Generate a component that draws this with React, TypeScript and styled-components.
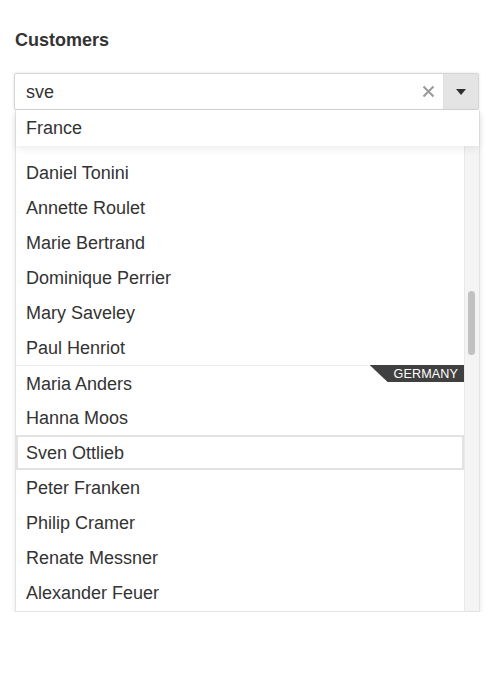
import React from "react";
import styled, { createGlobalStyle } from "styled-components";

const GlobalStyle = createGlobalStyle`
  html, body { margin: 0; padding: 0; background: #ffffff; }
  body { font-family: "Liberation Sans", Arial, sans-serif; color: #333333; }
  * { box-sizing: border-box; }
`;

const Page = styled.div`
  padding: 29px 15px 0 14px;
  width: 494px;
`;

const Title = styled.div`
  font-size: 18px;
  line-height: 22px;
  font-weight: bold;
  color: #333333;
  padding-left: 1px;
  margin-bottom: 22px;
`;

const Combo = styled.div`
  display: flex;
  height: 37px;
  width: 465px;
  border: 1px solid #d5d5d5;
  border-radius: 2px;
  box-shadow: 0 0 3px rgba(0, 0, 0, 0.12);
  background: #ffffff;
`;

const InputText = styled.div`
  flex: 1;
  display: flex;
  align-items: center;
  padding: 2px 0 0 11px;
  font-size: 18px;
  color: #333333;
`;

const ClearBtn = styled.div`
  width: 28px;
  display: flex;
  align-items: center;
  justify-content: center;
  padding-right: 1px;
`;

const ArrowBtn = styled.div`
  width: 35px;
  display: flex;
  align-items: center;
  justify-content: center;
  background: #e4e4e4;
  border-left: 1px solid #e0e0e0;
`;

const Popup = styled.div`
  margin-left: 1px;
  width: 465px;
  border: 1px solid #e3e3e3;
  border-top: none;
  background: #ffffff;
  box-shadow: 0 3px 5px rgba(0, 0, 0, 0.1);
`;

const GroupHeader = styled.div`
  position: relative;
  z-index: 1;
  height: 36px;
  display: flex;
  align-items: center;
  padding: 1px 0 0 10px;
  font-size: 18px;
  background: #ffffff;
  box-shadow: 0 3px 8px rgba(0, 0, 0, 0.07);
`;

const Body = styled.div`
  display: flex;
  height: 465px;
  overflow: hidden;
`;

const List = styled.ul`
  flex: 1;
  list-style: none;
  margin: 0;
  padding: 9px 0 0 0;
`;

const Item = styled.li<{ $focused?: boolean; $groupStart?: boolean }>`
  position: relative;
  height: 35px;
  display: flex;
  align-items: center;
  padding: 2px 0 0 10px;
  font-size: 18px;
  color: #333333;
  border-top: ${(p) => (p.$groupStart ? "1px solid #ececec" : "none")};
  box-shadow: ${(p) => (p.$focused ? "inset 0 0 0 2px #e2e2e2" : "none")};
`;

const Badge = styled.span`
  position: absolute;
  top: -1px;
  right: 0;
  height: 17px;
  display: flex;
  align-items: center;
  padding: 0 6px 0 24px;
  font-size: 12.6px;
  color: #ffffff;
  background: #404040;
  clip-path: polygon(0 0, 100% 0, 100% 100%, 18px 100%);
  letter-spacing: 0.1px;
`;

const Track = styled.div`
  width: 15px;
  background: #f4f4f4;
  border-left: 1px solid #e8e8e8;
  padding: 145px 0 0 3px;
`;

const Thumb = styled.div`
  width: 7px;
  height: 64px;
  border-radius: 4px;
  background: #c1c1c1;
`;

const ClearIcon = () => (
  <svg width="13" height="13" viewBox="0 0 13 13">
    <path d="M1.5 1.5 L11.5 11.5 M11.5 1.5 L1.5 11.5" stroke="#9a9a9a" strokeWidth="2" />
  </svg>
);

const ArrowIcon = () => (
  <svg width="10" height="6" viewBox="0 0 10 6">
    <path d="M0 0 H10 L5 6 Z" fill="#2e2e2e" />
  </svg>
);

const customers = [
  "Daniel Tonini",
  "Annette Roulet",
  "Marie Bertrand",
  "Dominique Perrier",
  "Mary Saveley",
  "Paul Henriot",
  "Maria Anders",
  "Hanna Moos",
  "Sven Ottlieb",
  "Peter Franken",
  "Philip Cramer",
  "Renate Messner",
  "Alexander Feuer",
];

export default function App() {
  return (
    <>
      <GlobalStyle />
      <Page>
        <Title>Customers</Title>
        <Combo>
          <InputText>sve</InputText>
          <ClearBtn>
            <ClearIcon />
          </ClearBtn>
          <ArrowBtn>
            <ArrowIcon />
          </ArrowBtn>
        </Combo>
        <Popup>
          <GroupHeader>France</GroupHeader>
          <Body>
            <List>
              {customers.map((name) => (
                <Item
                  key={name}
                  $focused={name === "Sven Ottlieb"}
                  $groupStart={name === "Maria Anders"}
                >
                  {name}
                  {name === "Maria Anders" && <Badge>GERMANY</Badge>}
                </Item>
              ))}
            </List>
            <Track>
              <Thumb />
            </Track>
          </Body>
        </Popup>
      </Page>
    </>
  );
}
